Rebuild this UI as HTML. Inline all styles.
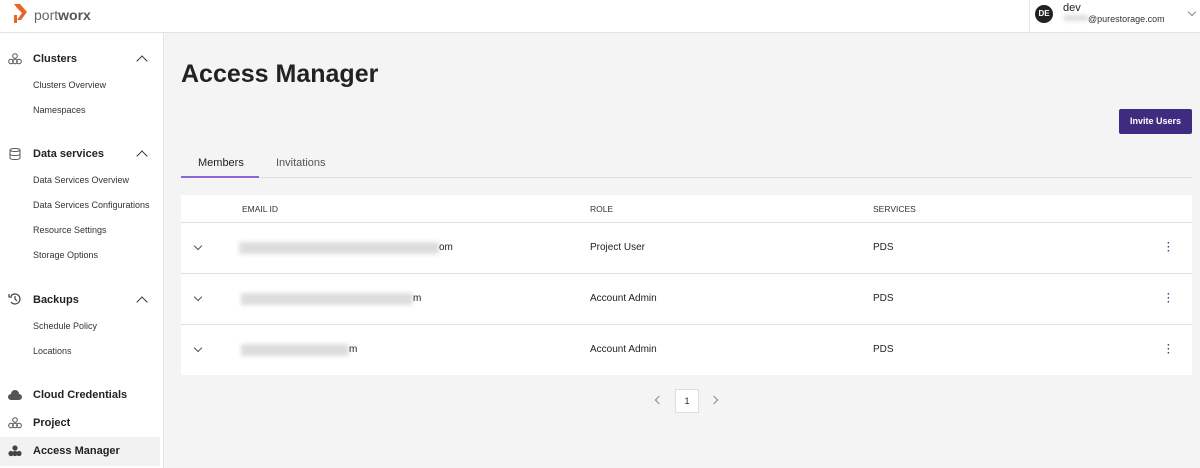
<!DOCTYPE html>
<html><head><style>
*{margin:0;padding:0;box-sizing:border-box}
body{width:1200px;height:468px;overflow:hidden;font-family:"Liberation Sans",sans-serif;background:#f4f4f4;color:#222;position:relative}
.hdr{position:absolute;left:0;top:0;width:1200px;height:33px;background:#fff;border-bottom:1px solid #e2e2e2}
.side{position:absolute;left:0;top:33px;width:164px;height:435px;background:#fff;border-right:1px solid #e4e4e4}
.a{position:absolute;white-space:nowrap}
.sec{font-size:11px;font-weight:bold;color:#222}
.sub{font-size:9px;color:#333}
.ic{position:absolute;left:8px;width:14px;height:12px}
.chev{position:absolute;left:138px;width:8px;height:8px;border-left:1.3px solid #333;border-top:1.3px solid #333;transform:rotate(45deg)}
.blur{position:absolute;height:12px;background:#ddd;filter:blur(2px)}
.tbl{position:absolute;left:181px;top:195px;width:1011px;height:180px;background:#fff}
.row{position:absolute;left:0;width:1011px;border-top:1px solid #e0e0e0}
.cell{position:absolute;font-size:10px;color:#222}
.dn{position:absolute;left:14px;width:6px;height:6px;border-right:1px solid #555;border-bottom:1px solid #555;transform:rotate(45deg)}
.dots{position:absolute;left:986px;font-size:10px;color:#4a3a8a;font-weight:bold;line-height:4px}
</style></head><body>
<div class="hdr">
<svg class="a" style="left:13px;top:4px" width="14" height="20" viewBox="0 0 14 20"><path d="M1 0h6l7 8-6 8H4l5-7-5-5z M1 11h3v8H1z" fill="#e8662a"/></svg>
<div class="a" style="left:34px;top:7px;font-size:14px;color:#666">port<b style="color:#555">worx</b></div>
<div class="a" style="left:1029px;top:0;width:1px;height:33px;background:#e6e6e6"></div>
<div class="a" style="left:1035px;top:5px;width:18px;height:18px;border-radius:50%;background:#222;color:#fff;font-size:8px;font-weight:bold;text-align:center;line-height:18px">DE</div>
<div class="a" style="left:1063px;top:2px;font-size:11px">dev</div>
<div class="blur" style="left:1064px;top:15px;width:24px;height:6px"></div>
<div class="a" style="left:1088px;top:14px;font-size:9px;color:#333">@purestorage.com</div>
<div class="a" style="left:1189px;top:9px;width:6px;height:6px;border-right:1px solid #888;border-bottom:1px solid #888;transform:rotate(45deg)"></div>
</div>
<div class="side">
<svg class="ic" style="top:20px" viewBox="0 0 14 12"><g fill="none" stroke="#555" stroke-width="1"><circle cx="7" cy="3" r="2.3"/><circle cx="3" cy="8.5" r="2.3"/><circle cx="7" cy="8.5" r="2.3"/><circle cx="11" cy="8.5" r="2.3"/></g></svg>
<div class="a sec" style="left:33px;top:20px">Clusters</div><div class="chev" style="top:24px"></div>
<div class="a sub" style="left:33px;top:47px">Clusters Overview</div>
<div class="a sub" style="left:33px;top:72px">Namespaces</div>
<svg class="ic" style="top:115px" viewBox="0 0 14 12"><g fill="none" stroke="#555"><ellipse cx="7" cy="2" rx="5" ry="1.5"/><path d="M2 2v8c0 1 2.2 1.5 5 1.5s5-.5 5-1.5V2M2 6c0 1 2.2 1.5 5 1.5S12 7 12 6"/></g></svg>
<div class="a sec" style="left:33px;top:115px">Data services</div><div class="chev" style="top:119px"></div>
<div class="a sub" style="left:33px;top:142px">Data Services Overview</div>
<div class="a sub" style="left:33px;top:167px">Data Services Configurations</div>
<div class="a sub" style="left:33px;top:192px">Resource Settings</div>
<div class="a sub" style="left:33px;top:217px">Storage Options</div>
<svg class="ic" style="top:260px" viewBox="0 0 14 12"><g fill="none" stroke="#444" stroke-width="1.2"><path d="M3 3a5 5 0 1 1 0 6"/><path d="M1 1v3h3M7 3v3l2 2"/></g></svg>
<div class="a sec" style="left:33px;top:261px">Backups</div><div class="chev" style="top:265px"></div>
<div class="a sub" style="left:33px;top:288px">Schedule Policy</div>
<div class="a sub" style="left:33px;top:313px">Locations</div>
<svg class="ic" style="top:356px" viewBox="0 0 14 12"><path d="M3 11a3 3 0 0 1 0-6 4 4 0 0 1 8 0 3 3 0 0 1 0 6z" fill="#555"/></svg>
<div class="a sec" style="left:33px;top:356px">Cloud Credentials</div>
<svg class="ic" style="top:384px" viewBox="0 0 14 12"><g fill="none" stroke="#555"><circle cx="7" cy="3" r="2.3"/><circle cx="3" cy="8.5" r="2.3"/><circle cx="7" cy="8.5" r="2.3"/><circle cx="11" cy="8.5" r="2.3"/></g></svg>
<div class="a sec" style="left:33px;top:384px">Project</div>
<div class="a" style="left:0;top:404px;width:160px;height:29px;background:#f2f2f2"></div>
<svg class="ic" style="top:412px" viewBox="0 0 14 12"><g fill="#444"><circle cx="7" cy="3" r="2.6"/><circle cx="3" cy="8.5" r="2.6"/><circle cx="7" cy="8.5" r="2.6"/><circle cx="11" cy="8.5" r="2.6"/></g></svg>
<div class="a sec" style="left:33px;top:412px">Access Manager</div>
</div>
<div class="a" style="left:181px;top:60px;font-size:25px;font-weight:bold;color:#222">Access Manager</div>
<div class="a" style="left:1119px;top:109px;width:73px;height:25px;background:#3f2c80;border-radius:2px;color:#fff;font-size:9px;font-weight:bold;text-align:center;line-height:25px">Invite Users</div>
<div class="a" style="left:181px;top:177px;width:1011px;height:1px;background:#e0e0e0"></div>
<div class="a" style="left:181px;top:176px;width:78px;height:2px;background:#8a68d6"></div>
<div class="a" style="left:198px;top:157px;font-size:11px;color:#222">Members</div>
<div class="a" style="left:276px;top:157px;font-size:11px;color:#555">Invitations</div>
<div class="tbl">
<div class="cell" style="left:61px;top:9px;font-size:8.5px;color:#333">EMAIL ID</div>
<div class="cell" style="left:409px;top:9px;font-size:8.5px;color:#333">ROLE</div>
<div class="cell" style="left:692px;top:9px;font-size:8.5px;color:#333">SERVICES</div>
<div class="row" style="top:27px;height:51px"><div class="dn" style="top:20px"></div><div class="blur" style="left:58px;top:19px;width:200px"></div><div class="cell" style="left:258px;top:19px">om</div><div class="cell" style="left:409px;top:19px">Project User</div><div class="cell" style="left:692px;top:19px">PDS</div><div class="dots" style="top:19px">·<br>·<br>·</div></div>
<div class="row" style="top:78px;height:51px"><div class="dn" style="top:20px"></div><div class="blur" style="left:60px;top:19px;width:172px"></div><div class="cell" style="left:232px;top:19px">m</div><div class="cell" style="left:409px;top:19px">Account Admin</div><div class="cell" style="left:692px;top:19px">PDS</div><div class="dots" style="top:19px">·<br>·<br>·</div></div>
<div class="row" style="top:129px;height:51px"><div class="dn" style="top:20px"></div><div class="blur" style="left:60px;top:19px;width:108px"></div><div class="cell" style="left:168px;top:19px">m</div><div class="cell" style="left:409px;top:19px">Account Admin</div><div class="cell" style="left:692px;top:19px">PDS</div><div class="dots" style="top:19px">·<br>·<br>·</div></div>
</div>
<div class="a" style="left:656px;top:397px;width:6px;height:6px;border-left:1px solid #888;border-bottom:1px solid #888;transform:rotate(45deg)"></div>
<div class="a" style="left:675px;top:389px;width:24px;height:24px;border:1px solid #ddd;background:#fff;font-size:9px;text-align:center;line-height:22px">1</div>
<div class="a" style="left:711px;top:397px;width:6px;height:6px;border-right:1px solid #888;border-top:1px solid #888;transform:rotate(45deg)"></div>
</body></html>
